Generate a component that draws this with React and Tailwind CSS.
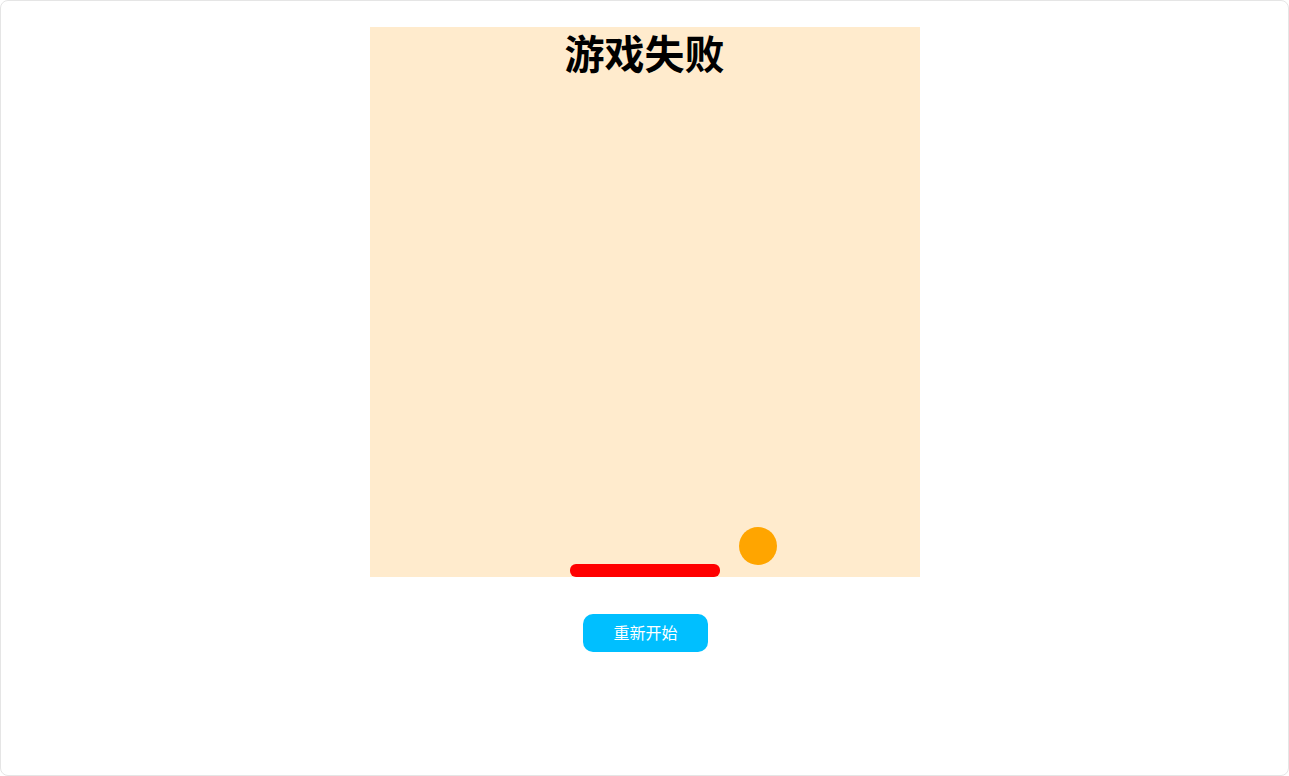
export default function App() {
    return (
        <div className="h-[776px] w-[1289px] rounded-lg border border-[#e5e5e5] bg-white" style={{ fontFamily: '"Liberation Sans", "Noto Sans CJK SC", sans-serif' }}>
            <div className="flex flex-col items-center pt-[26px]">
                {/* game board */}
                <div className="relative h-[550px] w-[550px] overflow-hidden bg-[#ffebcd]">
                    <h1 className="mt-[2px] text-center text-[40px] font-bold leading-[52px] text-black">游戏失败</h1>
                    <div className="absolute left-[369px] top-[500px] h-[38px] w-[38px] rounded-full bg-[#ffa500]"></div>
                    <div className="absolute left-[200px] top-[537px] h-[13px] w-[150px] rounded-[6px] bg-[#ff0000]"></div>
                </div>
                <button className="ml-[2px] mt-[37px] h-[38px] w-[125px] rounded-[10px] bg-[#00bfff] pt-[2px] text-[16px] text-white">重新开始</button>
            </div>
        </div>
    );
}
